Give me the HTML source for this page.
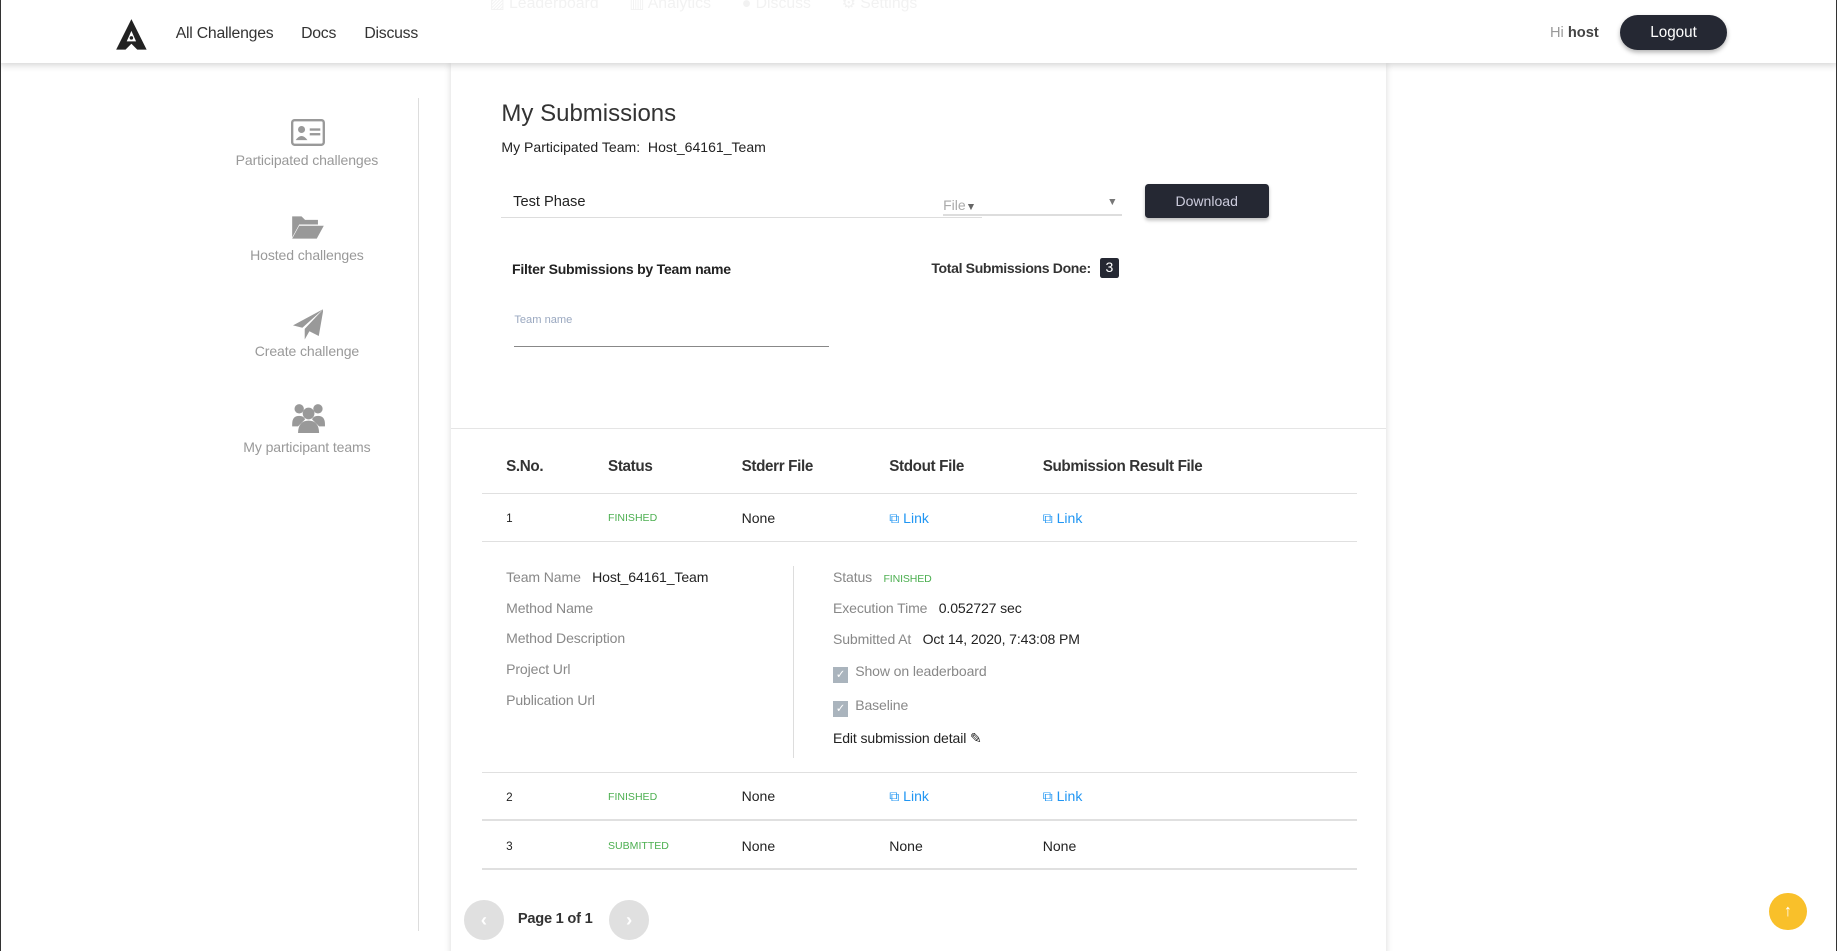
<!DOCTYPE html>
<html><head><meta charset="utf-8"><style>
html,body{margin:0;padding:0;width:1837px;height:951px;overflow:hidden;background:#fff;font-family:"Liberation Sans",sans-serif;}
#w{zoom:1.17156;position:relative;width:1568px;height:812px;overflow:hidden;background:#fff;}
.a{position:absolute;white-space:nowrap;}
.nav{position:absolute;left:0;top:0;width:1568px;height:54px;background:#fff;box-shadow:0 2px 6px rgba(0,0,0,.18);z-index:5;}
.nl{font-size:13.5px;color:#333;top:21px;letter-spacing:-0.2px;}
.card{position:absolute;left:385px;top:54px;width:798px;height:780px;background:#fff;box-shadow:0 0 6px rgba(0,0,0,.15);}
.sb{color:#999;font-size:12px;text-align:center;width:200px;left:162px;letter-spacing:-0.1px;}
.th{font-size:13px;color:#333;font-weight:bold;top:391px;letter-spacing:-0.3px;}
.td{font-size:12px;color:#222;}
.g{color:#4caf50;font-size:9px;}
.lk{color:#2196f3;font-size:12px;}
.hr{position:absolute;left:411px;width:747px;height:1px;background:#e0e0e0;}
.lb{color:#888;font-size:12px;left:432px;letter-spacing:-0.1px;}
.rl{color:#888;font-size:12px;left:711px;letter-spacing:-0.1px;}
.v{color:#222;}
.cb{display:inline-block;width:13px;height:13px;background:#aab4bd;vertical-align:-2px;margin-right:6px;color:#fff;font-size:10px;line-height:13px;text-align:center;}
</style></head><body><div id="w">
<div style="position:absolute;left:0;top:0;width:1px;height:812px;background:#333;z-index:6"></div>
<div style="position:absolute;left:1567px;top:0;width:1px;height:812px;background:#333;z-index:6"></div>
<div class="nav">
<svg class="a" style="left:98px;top:15px" width="28" height="28" viewBox="0 0 28 28"><path d="M14 1 L27 27 L19 27 L14 22 L9 27 L1 27 Z" fill="#222"/><path d="M14 11 L18 20 L10 20 Z" fill="#fff"/><circle cx="14" cy="17" r="1.5" fill="#222"/></svg>
<div class="a nl" style="left:150px">All Challenges</div>
<div class="a nl" style="left:257px">Docs</div>
<div class="a nl" style="left:311px">Discuss</div>
<div class="a" style="left:418px;top:-6px;font-size:13.5px;color:#f2f2f2">▨ Leaderboard &nbsp; &nbsp; &nbsp; ▥ Analytics &nbsp; &nbsp; &nbsp; ● Discuss &nbsp; &nbsp; &nbsp; ⚙ Settings</div>
<div class="a" style="left:1323px;top:21px;font-size:12.5px;color:#999">Hi <b style="color:#444">host</b></div>
<div class="a" style="left:1383px;top:13px;width:91px;height:30px;border-radius:15px;background:#252833;color:#fff;font-size:13px;text-align:center;line-height:30px;box-shadow:0 2px 4px rgba(0,0,0,.3)">Logout</div>
</div>
<div class="a" style="left:357px;top:84px;width:1px;height:711px;background:#ddd"></div>
<svg class="a" style="left:248px;top:102px" width="29" height="23" viewBox="0 0 29 23"><rect x="1" y="1" width="27" height="21" rx="2" fill="none" stroke="#999" stroke-width="2"/><circle cx="9" cy="9" r="3" fill="#999"/><path d="M4 18 Q9 11 14 18Z" fill="#999"/><rect x="16" y="8" width="9" height="2" fill="#999"/><rect x="16" y="12" width="9" height="2" fill="#999"/></svg>
<div class="a sb" style="top:130px">Participated challenges</div>
<svg class="a" style="left:248px;top:183px" width="29" height="22" viewBox="0 0 29 22"><path d="M1 2 h8 l3 3 h11 v4 H7 L1 20Z" fill="#999"/><path d="M7 10 H28 L22 21 H1Z" fill="#999"/></svg>
<div class="a sb" style="top:211px">Hosted challenges</div>
<svg class="a" style="left:250px;top:264px" width="26" height="26" viewBox="0 0 26 26"><path d="M26 0 L0 14 L8 16 Z" fill="#999"/><path d="M26 0 L10 17 L10 26 L14 19 L22 23Z" fill="#999"/></svg>
<div class="a sb" style="top:293px">Create challenge</div>
<svg class="a" style="left:248px;top:344px" width="30" height="26" viewBox="0 0 30 26"><circle cx="7" cy="5" r="4" fill="#999"/><circle cx="23" cy="5" r="4" fill="#999"/><circle cx="15" cy="9" r="5" fill="#999"/><path d="M1 18 Q1 11 7 11 Q11 11 12 14 L6 20 H1Z M29 18 Q29 11 23 11 Q19 11 18 14 L24 20 H29Z" fill="#999"/><path d="M6 26 Q6 15 15 15 Q24 15 24 26Z" fill="#999"/></svg>
<div class="a sb" style="top:375px">My participant teams</div>

<div class="card"></div>
<div class="a" style="left:428px;top:85px;font-size:20.5px;color:#333;font-weight:300">My Submissions</div>
<div class="a" style="left:428px;top:119px;font-size:12px;color:#222">My Participated Team:&nbsp; Host_64161_Team</div>
<div class="a" style="left:438px;top:166px;font-size:12.5px;color:#222">Test Phase</div>
<div class="a" style="left:428px;top:185px;width:410px;height:1px;background:#ddd"></div>
<div class="a" style="left:805px;top:168px;font-size:12px;color:#aaa">File<span style="font-size:9px;color:#666">▼</span></div>
<div class="a" style="left:945px;top:167px;font-size:9px;color:#777">▼</div>
<div class="a" style="left:805px;top:183px;width:153px;height:1px;background:#ddd"></div>
<div class="a" style="left:977px;top:157px;width:106px;height:29px;background:#252833;border-radius:3px;color:#ccd;font-size:12px;text-align:center;line-height:30px;box-shadow:0 2px 3px rgba(0,0,0,.25)">Download</div>
<div class="a" style="left:437px;top:223px;font-size:12px;color:#222;font-weight:bold;letter-spacing:-0.2px">Filter Submissions by Team name</div>
<div class="a" style="left:795px;top:222px;font-size:12px;color:#333;font-weight:bold;letter-spacing:-0.3px">Total Submissions Done:</div>
<div class="a" style="left:939px;top:220px;width:16px;height:17px;background:#252833;border-radius:2px;color:#fff;font-size:12px;text-align:center;line-height:17px">3</div>
<div class="a" style="left:439px;top:268px;font-size:9.5px;color:#9aa8c0">Team name</div>
<div class="a" style="left:439px;top:295px;width:269px;height:1px;background:#888"></div>
<div class="a" style="left:385px;top:365px;width:798px;height:1px;background:#e5e5e5"></div>

<div class="a th" style="left:432px">S.No.</div>
<div class="a th" style="left:519px">Status</div>
<div class="a th" style="left:633px">Stderr File</div>
<div class="a th" style="left:759px">Stdout File</div>
<div class="a th" style="left:890px">Submission Result File</div>
<div class="hr" style="top:421px"></div>
<div class="a td" style="left:432px;top:437px;font-size:10px">1</div>
<div class="a g" style="left:519px;top:437px">FINISHED</div>
<div class="a td" style="left:633px;top:435px">None</div>
<div class="a lk" style="left:759px;top:435px">⧉ Link</div>
<div class="a lk" style="left:890px;top:435px">⧉ Link</div>
<div class="hr" style="top:462px"></div>
<div class="a" style="left:677px;top:483px;width:1px;height:164px;background:#ddd"></div>
<div class="a lb" style="top:486px">Team Name &nbsp; <span class="v">Host_64161_Team</span></div>
<div class="a lb" style="top:512px">Method Name</div>
<div class="a lb" style="top:538px">Method Description</div>
<div class="a lb" style="top:564px">Project Url</div>
<div class="a lb" style="top:591px">Publication Url</div>
<div class="a rl" style="top:486px">Status &nbsp; <span class="g">FINISHED</span></div>
<div class="a rl" style="top:512px">Execution Time &nbsp; <span class="v">0.052727 sec</span></div>
<div class="a rl" style="top:539px">Submitted At &nbsp; <span class="v">Oct 14, 2020, 7:43:08 PM</span></div>
<div class="a rl" style="top:566px"><span class="cb">✓</span>Show on leaderboard</div>
<div class="a rl" style="top:595px"><span class="cb">✓</span>Baseline</div>
<div class="a rl" style="top:623px;color:#222">Edit submission detail ✎</div>
<div class="hr" style="top:659px"></div>
<div class="a td" style="left:432px;top:675px;font-size:10px">2</div>
<div class="a g" style="left:519px;top:675px">FINISHED</div>
<div class="a td" style="left:633px;top:673px">None</div>
<div class="a lk" style="left:759px;top:673px">⧉ Link</div>
<div class="a lk" style="left:890px;top:673px">⧉ Link</div>
<div class="hr" style="top:699px;height:2px"></div>
<div class="a td" style="left:432px;top:717px;font-size:10px">3</div>
<div class="a g" style="left:519px;top:717px">SUBMITTED</div>
<div class="a td" style="left:633px;top:715px">None</div>
<div class="a td" style="left:759px;top:715px">None</div>
<div class="a td" style="left:890px;top:715px">None</div>
<div class="hr" style="top:741px;height:2px"></div>
<div class="a" style="left:396px;top:768px;width:34px;height:34px;border-radius:50%;background:#e0e0e0;color:#fff;text-align:center;line-height:34px;font-size:16px;font-weight:bold">‹</div>
<div class="a" style="left:442px;top:778px;font-size:12.5px;color:#333;font-weight:bold;letter-spacing:-0.2px">Page 1 of 1</div>
<div class="a" style="left:520px;top:768px;width:34px;height:34px;border-radius:50%;background:#e0e0e0;color:#fff;text-align:center;line-height:34px;font-size:16px;font-weight:bold">›</div>
<div class="a" style="left:1510px;top:762px;width:32px;height:32px;border-radius:50%;background:#f9c02a;color:#fff;text-align:center;line-height:32px;font-size:14px;font-weight:bold">↑</div>
</div></body></html>
